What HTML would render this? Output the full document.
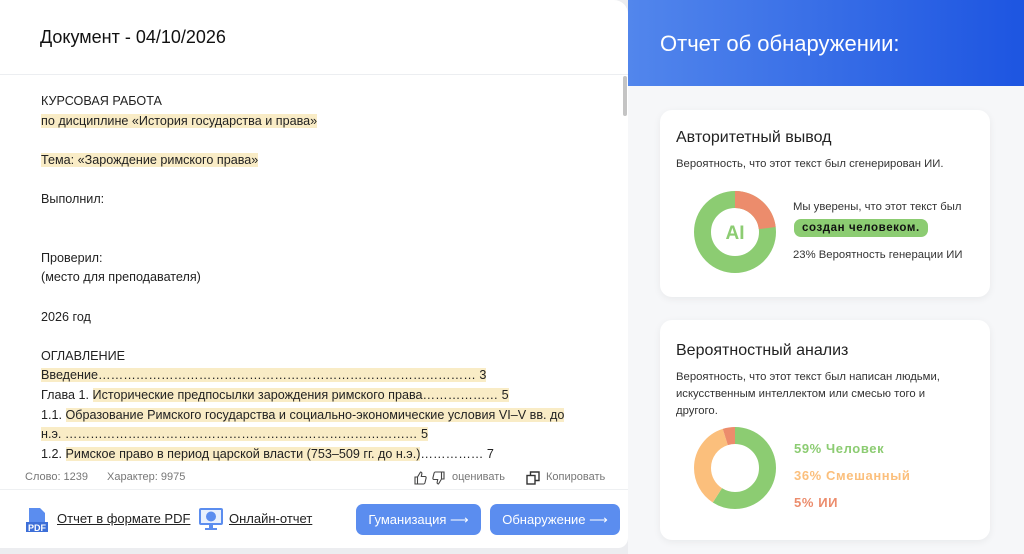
<!DOCTYPE html>
<html><head><meta charset="utf-8"><style>
*{margin:0;padding:0;box-sizing:border-box}
body{width:1024px;height:554px;overflow:hidden;background:#ecedf0;font-family:"Liberation Sans",sans-serif;color:#222;position:relative}
.left{position:absolute;left:0;top:0;width:628px;height:548px;background:#fff;border-radius:0 14px 10px 0}
.hdr{position:absolute;left:40px;top:27px;font-size:18px;color:#111}
.hl{position:absolute;left:0;top:74px;width:628px;height:1px;background:#eceef1}
.scroll{position:absolute;left:623px;top:76px;width:4px;height:40px;background:#c4c4c4;border-radius:2px}
.doc{position:absolute;left:41px;top:92px;font-size:12.6px;line-height:19.6px;letter-spacing:0px;color:#222;white-space:nowrap}
.doc div{height:19.6px}
.m{background:#f9ecc6}
.stats{position:absolute;top:471px;font-size:11px;color:#777}
.fl{position:absolute;left:0;top:489px;width:628px;height:1px;background:#eef0f2}
.lnk{position:absolute;top:511px;font-size:13px;color:#222;text-decoration:underline}
.btn{position:absolute;top:504px;height:31px;background:#5b8def;color:#fff;border-radius:7px;font-size:13px;text-align:center;line-height:31px}
.rhead{position:absolute;left:628px;top:0;width:396px;height:86px;background:linear-gradient(90deg,#5286ec,#1d55e1)}
.rbg{position:absolute;left:628px;top:86px;width:396px;height:468px;background:#f6f7f9}
.rt{position:absolute;left:660px;top:31px;font-size:22px;color:#fff}
.card{position:absolute;left:660px;width:330px;background:#fff;border-radius:12px;box-shadow:0 2px 8px rgba(0,0,0,.06)}
.ct{position:absolute;left:16px;font-size:16px;color:#222}
.cs{position:absolute;left:16px;font-size:11.3px;color:#333;line-height:17px}
</style></head><body>
<div class="left">
<div class="hdr">Документ - 04/10/2026</div>
<div class="hl"></div><div class="scroll"></div>
<div class="doc">
<div>КУРСОВАЯ РАБОТА</div>
<div><span class="m">по дисциплине «История государства и права»</span></div>
<div></div>
<div><span class="m">Тема: «Зарождение римского права»</span></div>
<div></div>
<div>Выполнил:</div>
<div></div><div></div>
<div>Проверил:</div>
<div>(место для преподавателя)</div>
<div></div>
<div>2026 год</div>
<div></div>
<div>ОГЛАВЛЕНИЕ</div>
<div><span class="m">Введение……………………………………………………………………………… 3</span></div>
<div>Глава 1. <span class="m">Исторические предпосылки зарождения римского права……………… 5</span></div>
<div>1.1. <span class="m">Образование Римского государства и социально-экономические условия VI–V вв. до</span></div>
<div><span class="m">н.э. ………………………………………………………………………… 5</span></div>
<div>1.2. <span class="m">Римское право в период царской власти (753–509 гг. до н.э.)</span>…………… 7</div>
</div>
<div class="stats" style="left:25px">Слово: 1239</div>
<div class="stats" style="left:107px">Характер: 9975</div>
<svg style="position:absolute;left:414px;top:471px" width="32" height="14" fill="none" stroke="#444" stroke-width="1.1"><path d="M1 6h2.5v7H1zM3.5 6l3-5c1.2 0 1.6 1 1.3 2L7.3 5.5H11c.8 0 1.3.7 1.1 1.5l-1.2 5c-.2.6-.6 1-1.2 1H3.5"/><path d="M30 8h-2.5V1H30zM27.5 8l-3 5c-1.2 0-1.6-1-1.3-2l.5-2.5H20c-.8 0-1.3-.7-1.1-1.5l1.2-5c.2-.6.6-1 1.2-1h6.2"/></svg>
<div class="stats" style="left:452px">оценивать</div>
<svg style="position:absolute;left:526px;top:471px" width="14" height="14" fill="none" stroke="#333" stroke-width="1.4"><rect x="1" y="4.5" width="8" height="8.5"/><path d="M4.5 4.5V1H13v8.5H9"/></svg>
<div class="stats" style="left:546px">Копировать</div>
<div class="fl"></div>
<svg style="position:absolute;left:25px;top:507px" width="26" height="26"><path d="M4 1h11l5 5v9H4z" fill="#5b8def"/><rect x="1" y="15" width="22" height="10" fill="#3d6fd8"/><text x="3" y="24" font-size="9" fill="#fff" font-family="Liberation Sans" font-weight="bold">PDF</text></svg>
<div class="lnk" style="left:57px">Отчет в формате PDF</div>
<svg style="position:absolute;left:198px;top:507px" width="26" height="24"><rect x="1" y="1" width="24" height="17" rx="2" fill="#5b8def"/><rect x="3" y="3" width="20" height="13" fill="#e8f0fd"/><circle cx="13" cy="9.5" r="5" fill="#5b8def"/><rect x="11" y="18" width="4" height="3" fill="#5b8def"/><rect x="7" y="21" width="12" height="2" fill="#5b8def"/></svg>
<div class="lnk" style="left:229px">Онлайн-отчет</div>
<div class="btn" style="left:356px;width:125px">Гуманизация ⟶</div>
<div class="btn" style="left:490px;width:130px">Обнаружение ⟶</div>
</div>
<div class="rhead"></div><div class="rbg"></div>
<div class="rt">Отчет об обнаружении:</div>
<div class="card" style="top:110px;height:187px">
<div class="ct" style="top:19px">Авторитетный вывод</div>
<div class="cs" style="top:46px">Вероятность, что этот текст был сгенерирован ИИ.</div>
<svg style="position:absolute;left:34px;top:81px" width="82" height="82" viewBox="0 0 82 82">
<circle cx="41" cy="41" r="32.5" fill="none" stroke="#8ccc72" stroke-width="17"/>
<circle cx="41" cy="41" r="32.5" fill="none" stroke="#ec8c6c" stroke-width="17" stroke-dasharray="46.97 300" transform="rotate(-90 41 41)"/>
<text x="41" y="48" text-anchor="middle" font-size="19" font-weight="bold" fill="#8ccc72" font-family="Liberation Sans">AI</text></svg>
<div class="cs" style="left:133px;top:89px">Мы уверены, что этот текст был</div>
<div style="position:absolute;left:134px;top:109px;background:#8ccc72;border-radius:7px;padding:0 8px;height:18px;line-height:18px;font-size:11.5px;font-weight:bold;color:#111;letter-spacing:0.6px">создан человеком.</div>
<div class="cs" style="left:133px;top:137px">23% Вероятность генерации ИИ</div>
</div>
<div class="card" style="top:320px;height:220px">
<div class="ct" style="top:22px">Вероятностный анализ</div>
<div class="cs" style="top:49px">Вероятность, что этот текст был написан людьми,<br>искусственным интеллектом или смесью того и<br>другого.</div>
<svg style="position:absolute;left:34px;top:107px" width="82" height="82" viewBox="0 0 82 82">
<g transform="rotate(-90 41 41)">
<circle cx="41" cy="41" r="32.5" fill="none" stroke="#8ccc72" stroke-width="17" stroke-dasharray="120.5 300"/>
<circle cx="41" cy="41" r="32.5" fill="none" stroke="#fbbf7c" stroke-width="17" stroke-dasharray="0 120.5 73.5 300"/>
<circle cx="41" cy="41" r="32.5" fill="none" stroke="#ec8c6c" stroke-width="17" stroke-dasharray="0 194 10.2 300"/>
</g></svg>
<div style="position:absolute;left:134px;top:121px;font-size:13px;font-weight:bold;color:#8ccc72;letter-spacing:0.6px">59% Человек</div>
<div style="position:absolute;left:134px;top:148px;font-size:13px;font-weight:bold;color:#fbbf7c;letter-spacing:0.6px">36% Смешанный</div>
<div style="position:absolute;left:134px;top:175px;font-size:13px;font-weight:bold;color:#ec8c6c;letter-spacing:0.6px">5% ИИ</div>
</div>
</body></html>
